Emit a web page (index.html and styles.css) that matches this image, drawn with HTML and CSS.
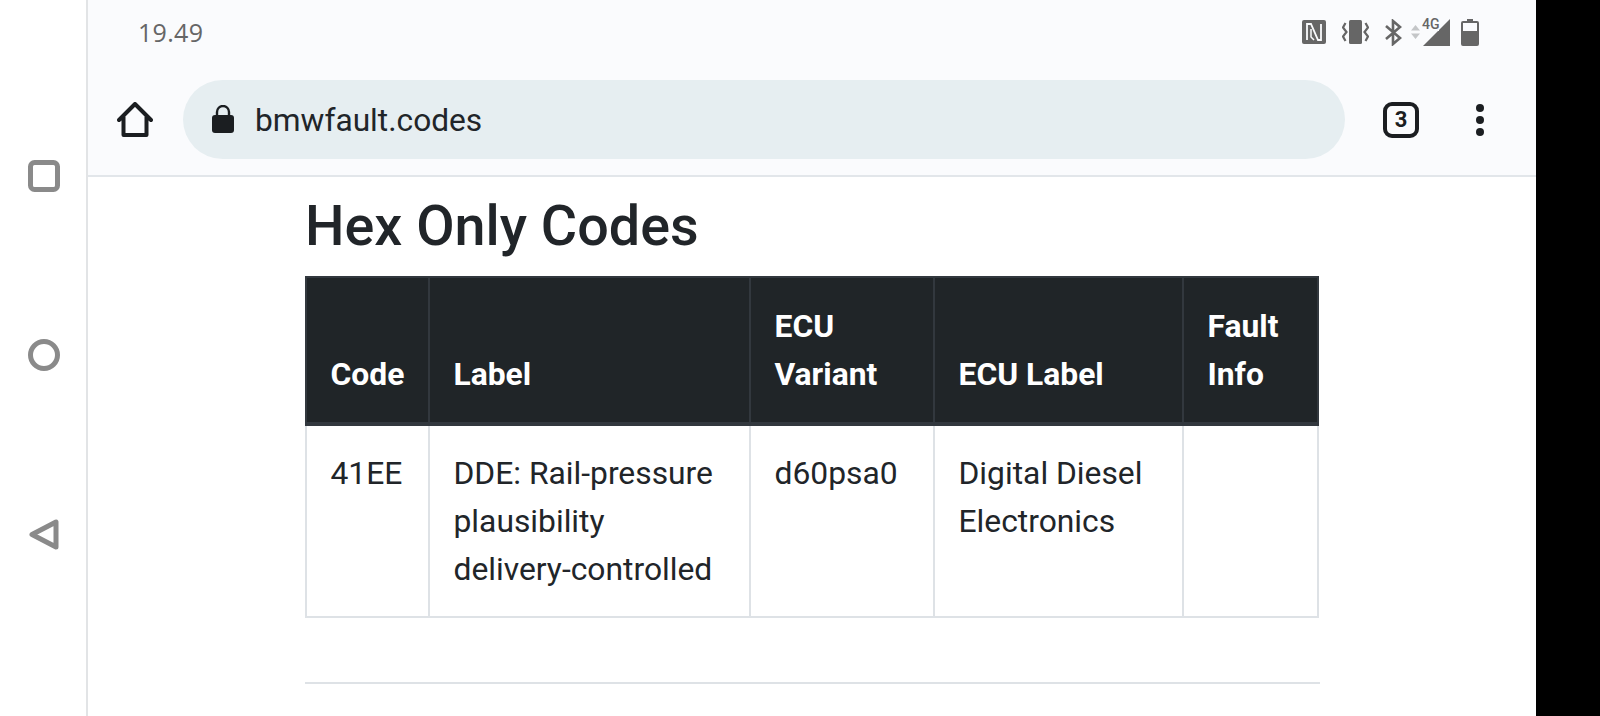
FILE: index.html
```html
<!DOCTYPE html>
<html lang="en">
<head>
    <meta charset="UTF-8">
    <title>Hex Only Codes</title>
    <link rel="stylesheet" href="styles.css">
</head>
<body>
    <div class="nav-rail">
        <svg class="nav-icon" viewBox="0 0 32 32"><rect x="2.5" y="2.5" width="27" height="27" rx="4" /></svg>
        <svg class="nav-icon" viewBox="0 0 32 32"><circle cx="16" cy="16" r="13.5" /></svg>
        <svg class="nav-icon" viewBox="0 0 32 32"><path d="M4 16.5 L28 4 V29 Z" stroke-linejoin="round" /></svg>
    </div>

    <div class="screen">
        <div class="status-bar">
            <span class="clock">19.49</span>
            <div class="status-icons">
                <svg class="status-nfc" viewBox="0 0 24 24"><rect width="24" height="24" rx="2" fill="#666" /><path d="M5 20V4h4l7 16h3V4" fill="none" stroke="#fafbfd" stroke-width="1.800" /><path d="M9 9v8l3 3" fill="none" stroke="#fafbfd" stroke-width="1.500" /></svg>
                <svg class="status-vibrate" viewBox="0 0 27 24"><rect x="7" y="0" width="13" height="24" rx="1.5" fill="#666" /><path d="M3.500 3 L1 7.500 L4.500 12 L1 16.500 L3.500 21 M23.500 3 L26 7.500 L22.500 12 L26 16.500 L23.500 21" fill="none" stroke="#666" stroke-width="2.200" /></svg>
                <svg class="status-bluetooth" viewBox="0 0 17 27"><path d="M1 7 L15 19 L8 25 V2 L15 8 L1 20" fill="none" stroke="#666" stroke-width="2.600" /></svg>
                <svg class="status-arrows" viewBox="0 0 9 14"><path d="M4.500 0 L9 5.500 H0 Z M4.500 14 L0 8.500 H9 Z" fill="#c4c6c8" /></svg>
                <svg class="status-signal" viewBox="0 0 27 27"><path d="M27 0 V27 H0 Z" fill="#666" /><rect x="-2" y="-1" width="18" height="13" fill="#fafbfd" /><text x="-1" y="10" class="status-4g">4G</text></svg>
                <svg class="status-battery" viewBox="0 0 18 27"><path d="M6 0 H12 V2 H16 Q18 2 18 4 V25 Q18 27 16 27 H2 Q0 27 0 25 V4 Q0 2 2 2 H6 Z" fill="#666" /><rect x="2" y="4" width="14" height="8" fill="#fafbfd" /></svg>
            </div>
        </div>

        <div class="toolbar">
            <svg class="home-icon" viewBox="0 0 36 36"><path d="M2 18 L18 2 L34 18 M6.500 15 V33 H29.500 V15" fill="none" stroke="#1b1e21" stroke-width="4" stroke-linejoin="round" stroke-linecap="round" /></svg>
            <div class="url-pill">
                <svg class="lock-icon" viewBox="0 0 22 28"><path d="M5 11 V7 A6 6 0 0 1 17 7 V11" fill="none" stroke="#1b1e21" stroke-width="2.400" /><rect y="10" width="22" height="18" rx="3" fill="#1b1e21" /></svg>
                <span class="url-text">bmwfault.codes</span>
            </div>
            <div class="tab-count">3</div>
            <div class="menu-dots"><span></span><span></span><span></span></div>
        </div>

        <main class="content">
            <h2>Hex Only Codes</h2>
            <table class="codes-table">
                <thead>
                    <tr>
                        <th class="col-code">Code</th>
                        <th class="col-label">Label</th>
                        <th class="col-variant">ECU Variant</th>
                        <th class="col-ecu">ECU Label</th>
                        <th class="col-info">Fault Info</th>
                    </tr>
                </thead>
                <tbody>
                    <tr>
                        <td>41EE</td>
                        <td>DDE: Rail-pressure plausibility delivery-controlled</td>
                        <td>d60psa0</td>
                        <td>Digital Diesel Electronics</td>
                        <td></td>
                    </tr>
                </tbody>
            </table>
            <hr>
        </main>
    </div>

    <div class="black-edge"></div>
</body>
</html>
```

FILE: styles.css
```css
:root {
    --text-color: #212529;
    --line-color: #dee2e6;
    --bar-color: #fafbfd;
    --status-color: #666666;
}

html, body {
    height: 100%;
}

body {
    margin: 0;
    display: flex;
    overflow: hidden;
    background-color: #FFFFFF;
    color: var(--text-color);
    font-family: Roboto, sans-serif;
}

/* Android nav buttons */
.nav-rail {
    width: 88px;
    flex-shrink: 0;
    padding: 160px 0 0 2px;
    display: flex;
    flex-direction: column;
    align-items: center;
    gap: 147px;
    box-sizing: border-box;
    border-right: 2px solid #e2e4e6;
}

.nav-icon {
    width: 32px;
    height: 32px;
    fill: none;
    stroke: #8a8a8a;
    stroke-width: 5;
}

.screen {
    flex: 1;
    min-width: 0;
    display: flex;
    flex-direction: column;
}

.black-edge {
    width: 64px;
    flex-shrink: 0;
    background-color: #000000;
}

/* Status bar */
.status-bar {
    height: 67px;
    padding: 0 57px 3px 50px;
    box-sizing: border-box;
    display: flex;
    justify-content: space-between;
    align-items: center;
    background-color: var(--bar-color);
}

.clock {
    font-family: "Open Sans", sans-serif;
    font-size: 25px;
    font-weight: 500;
    letter-spacing: 0.3px;
    color: var(--status-color);
}

.status-icons {
    display: flex;
    align-items: center;
}

.status-nfc { width: 24px; height: 24px; margin-right: 16px; }
.status-vibrate { width: 27px; height: 24px; margin-right: 16px; }
.status-bluetooth { width: 17px; height: 27px; margin-right: 9px; }
.status-arrows { width: 9px; height: 14px; margin-right: 3px; }
.status-signal { width: 27px; height: 27px; margin-right: 11px; overflow: visible; }
.status-battery { width: 18px; height: 27px; }

.status-4g {
    font-family: Roboto, sans-serif;
    font-size: 14px;
    font-weight: 500;
    fill: var(--status-color);
}

/* Chrome toolbar */
.toolbar {
    height: 110px;
    box-sizing: border-box;
    padding: 13px 37px 16px 29px;
    display: flex;
    align-items: center;
    background-color: var(--bar-color);
    border-bottom: 2px solid #e2e6ea;
}

.home-icon {
    width: 36px;
    height: 36px;
    margin-right: 30px;
}

.url-pill {
    width: 1162px;
    height: 79px;
    padding-left: 29px;
    box-sizing: border-box;
    display: flex;
    align-items: center;
    background-color: #e6eef1;
    border-radius: 40px;
}

.lock-icon {
    width: 22px;
    height: 28px;
    margin: 0 21px 2px 0;
}

.url-text {
    padding-top: 2px;
    font-size: 31.700px;
    color: var(--text-color);
}

.tab-count {
    width: 36px;
    height: 36px;
    margin-left: 38px;
    box-sizing: border-box;
    display: flex;
    align-items: center;
    justify-content: center;
    border: 4px solid #1b1e21;
    border-radius: 9px;
    font-size: 22px;
    font-weight: 700;
    color: #1b1e21;
}

.menu-dots {
    margin-left: 57px;
    display: flex;
    flex-direction: column;
    gap: 4px;
}

.menu-dots span {
    width: 8px;
    height: 8px;
    background-color: #1b1e21;
    border-radius: 50%;
}

/* Page content */
.content {
    padding-left: 217px;
    width: 1015px;
}

h2 {
    margin: 17px 0 18px;
    font-size: 55.700px;
    font-weight: 500;
    line-height: 64px;
}

.codes-table {
    width: 1014px;
    border-collapse: collapse;
    table-layout: fixed;
    font-size: 31.800px;
    line-height: 48px;
}

.codes-table th,
.codes-table td {
    box-sizing: border-box;
    padding: 23px 24px 23px 23.500px;
    border: 2px solid var(--line-color);
    text-align: left;
    vertical-align: top;
    font-weight: 400;
}

.codes-table th {
    padding: 24px 24px 24px 23.500px;
    vertical-align: bottom;
    font-weight: 700;
    color: #FFFFFF;
    background-color: #202528;
    border-color: #32383e;
    border-bottom-width: 4px;
}

.col-code { width: 123px; }
.col-label { width: 321px; }
.col-variant { width: 184px; }
.col-ecu { width: 249px; }

hr {
    width: 1015px;
    margin: 64px 0 0;
    border: 0;
    border-top: 2px solid var(--line-color);
}
```
